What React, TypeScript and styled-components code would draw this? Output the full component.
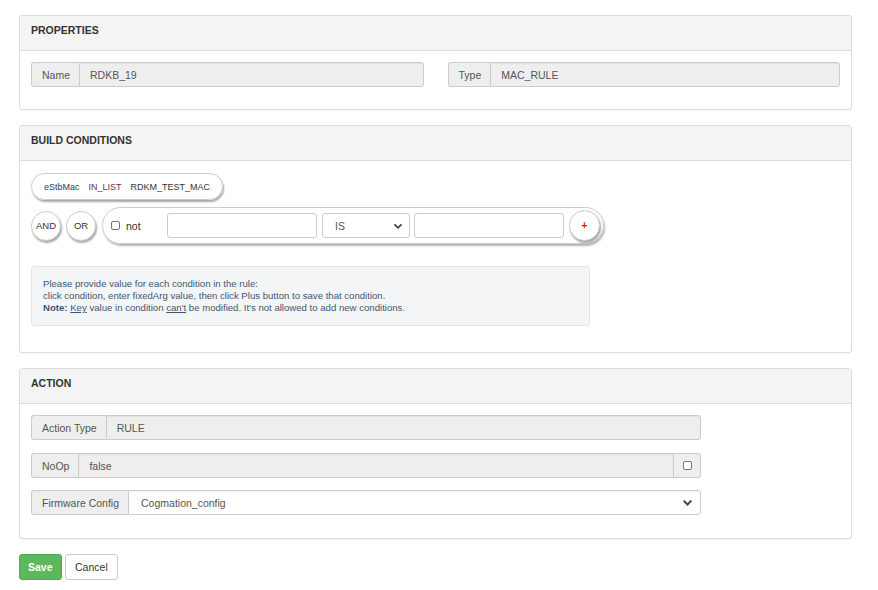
import React from 'react'
import styled, { createGlobalStyle } from 'styled-components'

const GlobalStyle = createGlobalStyle`
  html, body {
    margin: 0;
    padding: 0;
    background: #fff;
  }
  body {
    font-family: "Liberation Sans", Arial, sans-serif;
    font-size: 10.5px;
    color: #333;
  }
`

const Page = styled.div`
  padding: 15px 26px 10px 19px;
`

const Panel = styled.section`
  border: 1px solid #ddd;
  border-radius: 3px;
  margin-bottom: 15px;
  background: #fff;
  box-shadow: 0 1px 1px rgba(0, 0, 0, 0.04);
`

const PanelHeading = styled.div`
  height: 35px;
  box-sizing: border-box;
  padding: 0 11px 6px;
  display: flex;
  align-items: center;
  background: #f4f4f4;
  border-bottom: 1px solid #ddd;
  font-weight: bold;
  font-size: 10.5px;
  color: #333;
`

const PanelBody = styled.div<{ $pt?: number; $pb?: number }>`
  padding: ${p => p.$pt ?? 11}px 11px ${p => p.$pb ?? 22}px 11px;
`

const TwoCols = styled.div`
  display: grid;
  grid-template-columns: 1fr 1fr;
  column-gap: 24px;
`

const Group = styled.div<{ $width?: number; $mb?: number }>`
  display: flex;
  height: 25px;
  width: ${p => (p.$width ? p.$width + 'px' : '100%')};
  margin-bottom: ${p => p.$mb ?? 0}px;
`

const Addon = styled.div`
  display: flex;
  align-items: center;
  padding: 0 9px 0 10px;
  background: #eee;
  border: 1px solid #ccc;
  border-right: none;
  border-radius: 3px 0 0 3px;
  color: #555;
  white-space: nowrap;
  font-size: 10.5px;
`

const RightAddon = styled.div`
  display: flex;
  align-items: center;
  justify-content: center;
  width: 27px;
  background: #eee;
  border: 1px solid #ccc;
  border-left: none;
  border-radius: 0 3px 3px 0;
  box-sizing: border-box;
`

const Field = styled.div<{ $readonly?: boolean; $joined?: boolean }>`
  flex: 1;
  display: flex;
  align-items: center;
  padding: 0 10px;
  background: ${p => (p.$readonly ? '#eee' : '#fff')};
  border: 1px solid #ccc;
  border-radius: ${p => (p.$joined ? '0' : '0 3px 3px 0')};
  color: #555;
  font-size: 10.5px;
  box-shadow: inset 0 1px 1px rgba(0, 0, 0, 0.05);
`

const SelectField = styled(Field)`
  justify-content: space-between;
  padding: 0 7px 0 12px;
`

const SmallBox = styled.span`
  display: inline-block;
  width: 9px;
  height: 9px;
  border: 1px solid #767676;
  border-radius: 2px;
  background: #fff;
  box-sizing: border-box;
`

const Chevron = ({ size = 10 }: { size?: number }) => (
  <svg width={size} height={size} viewBox="0 0 10 10">
    <path d="M1.5 3.3 L5 6.8 L8.5 3.3" fill="none" stroke="#444" strokeWidth="1.8" />
  </svg>
)

/* build conditions */

const RulePill = styled.div`
  display: flex;
  width: fit-content;
  align-items: center;
  gap: 9px;
  height: 27px;
  box-sizing: border-box;
  padding: 0 12px;
  border: 1px solid #ccc;
  border-radius: 14px;
  box-shadow: 1px 2px 2px rgba(0, 0, 0, 0.35);
  font-size: 9px;
  color: #333;
  margin-bottom: 7px;
`

const Token = styled.span<{ $color?: string }>`
  color: ${p => p.$color ?? '#333'};
`

const ConditionRow = styled.div`
  display: flex;
  align-items: center;
  gap: 5px;
`

const RoundBtn = styled.button<{ $size?: number }>`
  width: ${p => p.$size ?? 30}px;
  height: ${p => p.$size ?? 30}px;
  border-radius: 50%;
  border: 1px solid #ccc;
  background: #fff;
  box-shadow: 1px 2px 2px rgba(0, 0, 0, 0.35);
  font-family: inherit;
  font-size: 9.5px;
  color: #333;
  padding: 0;
  display: flex;
  align-items: center;
  justify-content: center;
`

const ConditionPill = styled.div`
  display: flex;
  align-items: center;
  height: 37px;
  box-sizing: border-box;
  margin-left: 1px;
  padding: 0 3px 0 8px;
  border: 1px solid #ccc;
  border-radius: 19px;
  box-shadow: 1px 2px 2px rgba(0, 0, 0, 0.3);
`

const NotLabel = styled.label`
  display: flex;
  align-items: center;
  gap: 6px;
  width: 56px;
  font-size: 10.5px;
  color: #333;
`

const TextInput = styled.div<{ $width: number }>`
  width: ${p => p.$width}px;
  height: 25px;
  box-sizing: border-box;
  border: 1px solid #ccc;
  border-radius: 3px;
  background: #fff;
  margin-right: 5px;
`

const OpSelect = styled.div`
  width: 88px;
  height: 25px;
  box-sizing: border-box;
  border: 1px solid #ccc;
  border-radius: 3px;
  display: flex;
  align-items: center;
  justify-content: space-between;
  padding: 0 6px 0 12px;
  font-size: 10.5px;
  color: #555;
  margin-right: 4px;
`

const Plus = styled.span`
  color: #ff0000;
  font-size: 10px;
  font-weight: bold;
`

const InfoBox = styled.div`
  width: 559px;
  margin-top: 22px;
  padding: 11px 11px 11px 11px;
  box-sizing: border-box;
  background: #f4f5f7;
  border: 1px solid #e6e6e6;
  border-radius: 3px;
  color: #3e5770;
  font-size: 9.6px;
  line-height: 12px;
`

const Under = styled.span`
  text-decoration: underline;
`

/* footer buttons */

const Actions = styled.div`
  display: flex;
  gap: 3px;
`

const Btn = styled.button<{ $primary?: boolean }>`
  height: 26px;
  padding: 0 ${p => (p.$primary ? '8px' : '9.5px')};
  border-radius: 3px;
  font-family: inherit;
  font-size: 10.5px;
  font-weight: ${p => (p.$primary ? 'bold' : 'normal')};
  border: 1px solid ${p => (p.$primary ? '#4cae4c' : '#ccc')};
  background: ${p => (p.$primary ? '#5cb85c' : '#fff')};
  color: ${p => (p.$primary ? '#fff' : '#333')};
`

export default function App() {
  return (
    <>
      <GlobalStyle />
      <Page>
        <Panel>
          <PanelHeading>PROPERTIES</PanelHeading>
          <PanelBody>
            <TwoCols>
              <Group>
                <Addon>Name</Addon>
                <Field $readonly>RDKB_19</Field>
              </Group>
              <Group>
                <Addon>Type</Addon>
                <Field $readonly>MAC_RULE</Field>
              </Group>
            </TwoCols>
          </PanelBody>
        </Panel>

        <Panel>
          <PanelHeading>BUILD CONDITIONS</PanelHeading>
          <PanelBody $pt={12} $pb={26}>
            <RulePill>
              <Token $color="#2c3e50">eStbMac</Token>
              <Token $color="#6b2f52">IN_LIST</Token>
              <Token>RDKM_TEST_MAC</Token>
            </RulePill>
            <ConditionRow>
              <RoundBtn>AND</RoundBtn>
              <RoundBtn>OR</RoundBtn>
              <ConditionPill>
                <NotLabel>
                  <SmallBox />
                  not
                </NotLabel>
                <TextInput $width={150} />
                <OpSelect>
                  IS
                  <Chevron />
                </OpSelect>
                <TextInput $width={150} />
                <RoundBtn $size={31}>
                  <Plus>+</Plus>
                </RoundBtn>
              </ConditionPill>
            </ConditionRow>
            <InfoBox>
              Please provide value for each condition in the rule:
              <br />
              click condition, enter fixedArg value, then click Plus button to save that condition.
              <br />
              <b>Note:</b> <Under>Key</Under> value in condition <Under>can't</Under> be modified. It's not
              allowed to add new conditions.
            </InfoBox>
          </PanelBody>
        </Panel>

        <Panel>
          <PanelHeading>ACTION</PanelHeading>
          <PanelBody $pb={23}>
            <Group $width={670} $mb={13}>
              <Addon>Action Type</Addon>
              <Field $readonly>RULE</Field>
            </Group>
            <Group $width={670} $mb={12}>
              <Addon>NoOp</Addon>
              <Field $readonly $joined>
                false
              </Field>
              <RightAddon>
                <SmallBox />
              </RightAddon>
            </Group>
            <Group $width={670}>
              <Addon>Firmware Config</Addon>
              <SelectField>
                Cogmation_config
                <Chevron size={11} />
              </SelectField>
            </Group>
          </PanelBody>
        </Panel>

        <Actions>
          <Btn $primary>Save</Btn>
          <Btn>Cancel</Btn>
        </Actions>
      </Page>
    </>
  )
}
